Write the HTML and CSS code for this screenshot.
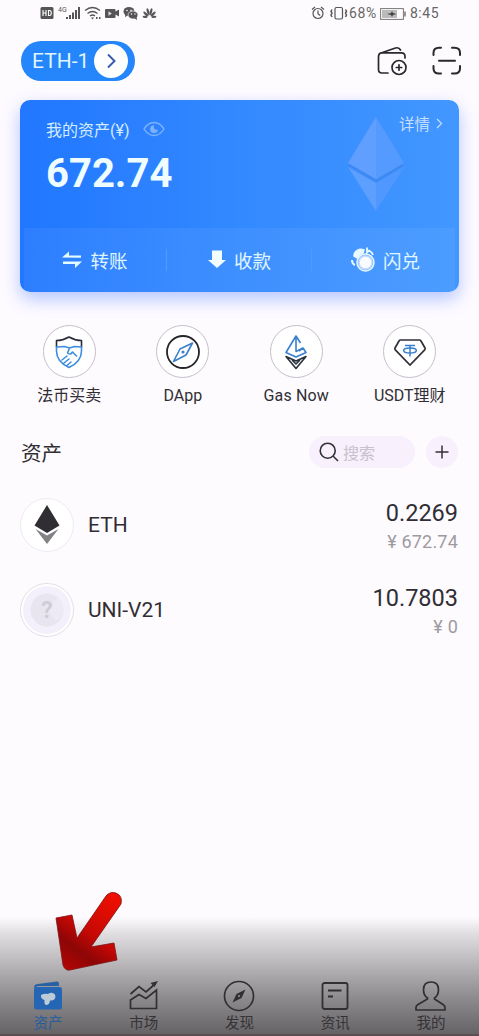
FILE: index.html
```html
<!DOCTYPE html>
<html lang="zh-CN">
<head>
<meta charset="utf-8">
<meta name="viewport" content="width=device-width, initial-scale=1">
<title>资产</title>
<link rel="stylesheet" href="styles.css">
</head>
<body>
<div class="app">
  <header class="status">
    <svg class="status-left" width="118" height="16" viewBox="0 0 118 16" fill="#555">
      <rect x="0.500" y="1" width="13" height="12" rx="1.500"/>
      <path d="M3 4v6M6 4v6M3 7h3M8.500 4.500v5h1q1.800 0 1.800-2.500t-1.800-2.500z" fill="none" stroke="#fff" stroke-width="1.100"/>
      <text x="18" y="6" class="net">4G</text>
      <path d="M26 11h2v2h-2zM29 9h2v4h-2zM32 6.500h2V13h-2zM35 4h2v9h-2zM38 1h2v12h-2z"/>
      <g fill="none" stroke="#555" stroke-width="1.300"><path d="M45 4.500q7.500-6 15 0M47.500 7.500q5-4 10 0M50 10q2.500-2 5 0"/></g>
      <path d="M51 11.500h3l-1.500 2zM56 11h1.500v2H56zM59 11h1.500v2H59z"/>
      <path d="M66 3h8.500q1 0 1 1v1.500L79 3.500v7l-3.500-2V11q0 1-1 1H66q-1 0-1-1V4q0-1 1-1z"/>
      <path d="M68.500 5.300v4.400l3.300-2.200z" fill="#ddd"/>
      <ellipse cx="89" cy="5.500" rx="5.500" ry="4.500"/><path d="M85.500 8l-.5 3 3-1.500z"/>
      <ellipse cx="93" cy="9" rx="5" ry="4" stroke="#fefbff" stroke-width=".7"/><path d="M94 12l3 2-.3-3z"/>
      <g fill="#fefbff"><circle cx="87" cy="4.500" r=".8"/><circle cx="91" cy="4.300" r=".8"/><circle cx="91.500" cy="8" r=".7"/><circle cx="95" cy="8" r=".7"/></g>
      <g transform="translate(109.500 11.500)"><ellipse cy="-6" rx="1.200" ry="3.600" transform="rotate(-14)"/><ellipse cy="-6" rx="1.200" ry="3.600" transform="rotate(14)"/><ellipse cy="-5" rx="1.200" ry="3.300" transform="rotate(-46)"/><ellipse cy="-5" rx="1.200" ry="3.300" transform="rotate(46)"/><ellipse cy="-4.500" rx="1.100" ry="2.500" transform="rotate(-82)"/><ellipse cy="-4.500" rx="1.100" ry="2.500" transform="rotate(82)"/></g>
    </svg>
    <div class="status-right">
      <svg width="38" height="16" viewBox="0 0 38 16" fill="none" stroke="#555" stroke-width="1.200">
        <circle cx="7" cy="7.500" r="5"/><path d="M7 4.500v3.300l2.200 1.700M1 3.500L4 1M13 3.500L10 1"/>
        <rect x="24" y="1.500" width="7.500" height="11.500" rx="1.500"/><path d="M21 3.500l-1 2 1 1.500-1 2 1 2M34.500 3.500l1 2-1 1.500 1 2-1 2" stroke-width="1.500"/>
      </svg>
      <span class="battery-text">68%</span>
      <svg class="battery" width="27" height="12" viewBox="0 0 27 12">
        <rect x=".6" y=".6" width="22.800" height="10.800" fill="#fefbff" stroke="#777"/><path d="M2 2h15v8H2z" fill="#bbb"/><path d="M25 3.500v5" stroke="#777" stroke-width="1.500"/><path d="M7 6l4-1 1-2 1 2 3.500 1-3.500 1-1 2-1-2z" fill="#444"/>
      </svg>
      <span class="time">8:45</span>
    </div>
  </header>

  <div class="topbar">
    <div class="wallet-pill"><span>ETH-1</span>
      <svg width="34" height="34" viewBox="0 0 34 34"><circle cx="17" cy="17" r="17" fill="#fff"/><path d="M14 10.500l6.500 6.500-6.500 6.500" fill="none" stroke="#3c5bb0" stroke-width="2"/></svg>
    </div>
    <div class="tools">
      <svg width="32" height="32" viewBox="0 0 32 32" fill="none" stroke="#29282c" stroke-width="1.700" stroke-linecap="round" stroke-linejoin="round">
        <path d="M12 28H6Q2.500 28 2.500 24.500V12Q2.500 7.800 6 7.800H25.500Q29 7.800 29 11.500V13M3.500 8.500L19.500 3Q23 2 24.500 5"/><circle cx="23" cy="22.500" r="7"/><path d="M20.300 22.500h5.400M23 19.800v5.400"/>
      </svg>
      <svg width="30" height="30" viewBox="0 0 30 30" fill="none" stroke="#29282c" stroke-width="2" stroke-linecap="round">
        <path d="M1.500 9V7Q1.500 1.800 7 1.800H9M20 1.800h2.500Q28 1.800 28 7v2M28 20v2.500q0 5-5.500 5H20M9 27.500H7q-5.500 0-5.500-5V20M7 14.800h16"/>
      </svg>
    </div>
  </div>

  <section class="card">
    <div class="card-main">
      <div class="balance">
        <div class="balance-label"><span>我的资产(¥)</span>
          <svg width="22" height="16" viewBox="0 0 22 16" fill="none" stroke="#7eb2ff" stroke-width="1.400"><path d="M1 8Q5 1.500 11 1.500T21 8Q17 14.500 11 14.500T1 8z"/><path d="M11 4.200a3.900 3.900 0 1 0 3.900 4.300Q10 9.500 11 4.200z" fill="#7eb2ff" stroke="none"/></svg>
        </div>
        <div class="amount">672.74</div>
      </div>
      <svg class="eth-mark" width="56" height="94" viewBox="0 0 56 94">
        <path d="M28 0L0 46l28 16z" fill="#609fff"/><path d="M28 0l28 46-28 16z" fill="#559bff"/><path d="M0 50l28 16v28z" fill="#5c9fff"/><path d="M56 50L28 66v28z" fill="#5098ff"/><path d="M1 48l27 16 27-16" fill="none" stroke="#4187ee" stroke-width="2"/>
      </svg>
      <div class="detail"><span>详情</span><svg width="7" height="11" viewBox="0 0 7 11"><path d="M1 1l4.500 4.500L1 10" fill="none" stroke="#c6deff" stroke-width="1.200"/></svg></div>
    </div>
    <div class="card-actions">
      <div class="action first"><svg width="20" height="18" viewBox="0 0 20 18" fill="#e5fcff"><path d="M0 6.500L7 .5v4h12v2.300zM20 10.500l-7 6.500v-4H1v-2.500z"/></svg><span>转账</span></div>
      <div class="action second"><svg width="18" height="19" viewBox="0 0 18 19" fill="#f2fdff"><path d="M4 .5h10v9.500h4l-9 8-9-8h4z"/></svg><span>收款</span></div>
      <div class="action third"><svg width="27" height="28" viewBox="0 0 27 28" fill="none" stroke="#e6faff" stroke-width="1.500"><path d="M4 10a7 6.500 0 0 1 10-6l-1 3q-4 1-6 5z" fill="#e6faff"/><path d="M17 1.500v5l2-2q3 1.500 4 4.500" stroke-width="1.800"/><path d="M2 14q0 4 3 5" stroke-width="2"/><circle cx="15.500" cy="16.500" r="8.500" fill="#77adff"/><circle cx="15.500" cy="16.500" r="6.500" fill="#f8fcff" stroke="#c5dcff"/></svg><span>闪兑</span></div>
    </div>
  </section>

  <section class="shortcuts">
    <div class="shortcut"><div class="ring"><svg width="30" height="34" viewBox="0 0 30 34" fill="none" stroke-width="1.600" stroke-linejoin="round" stroke-linecap="round"><path d="M2.500 12V5.500Q9 5.500 15 2q6 3.500 12.500 3.500V12" stroke="#292d3a"/><path d="M2.500 12v4c0 8 6 13.500 12.500 16.500C21.500 29.500 27.500 24 27.500 16v-4l-7-.5-5 1.500-5-1.500-8 .5M15.500 13l-2 5q3 2.500 5-1l4 4M8 25l5-4M10 28l5-4M13 30.500l4-3.500" stroke="#3d8de0"/></svg></div><span>法币买卖</span></div>
    <div class="shortcut"><div class="ring"><svg width="36" height="36" viewBox="0 0 36 36" fill="none"><circle cx="18" cy="18" r="16" stroke="#26252a" stroke-width="1.800"/><path d="M27.500 9L21 21 8.500 27.500 15 15z" stroke="#397fcd" stroke-width="1.600" stroke-linejoin="round"/><circle cx="18" cy="18" r="1.600" fill="#397fcd"/></svg></div><span>DApp</span></div>
    <div class="shortcut"><div class="ring"><svg width="26" height="36" viewBox="0 0 26 36" fill="none" stroke-width="1.600" stroke-linejoin="round"><path d="M17.500 9L13 2 3 18.500l10 4.500 10-4.500L20 14l-7 3.500V2M20 14l-4 3" stroke="#397fcd"/><path d="M3 22.500l10 12 10-12-10 4.500zM9 26l4 4 4-4" stroke="#29303b"/></svg></div><span class="gas">Gas Now</span></div>
    <div class="shortcut"><div class="ring"><svg width="34" height="32" viewBox="0 0 34 32" fill="none"><path d="M7.500 4h19q1 0 1.500 1l4 7q.5 1-.3 1.800L17 29 2.300 13.800Q1.500 13 2 12l4-7q.5-1 1.500-1z" stroke="#303039" stroke-width="1.700"/><g stroke="#397fcd" stroke-width="1.500"><path d="M12 9.500h10M17 9.500V20.500"/><ellipse cx="17" cy="14.500" rx="6.300" ry="2.500"/></g></svg></div><span>USDT理财</span></div>
  </section>

  <section class="assets">
    <div class="assets-head"><h2>资产</h2>
      <div class="search"><svg width="20" height="20" viewBox="0 0 20 20" fill="none" stroke="#343239" stroke-width="1.600"><circle cx="8.700" cy="8.700" r="7.500"/><path d="M14 14l5 5"/></svg><span>搜索</span></div>
      <div class="add"><svg width="14" height="14" viewBox="0 0 14 14"><path d="M7 .5v13M.5 7h13" stroke="#343239" stroke-width="1.500"/></svg></div>
    </div>
    <div class="asset"><svg class="coin" width="54" height="54" viewBox="0 0 54 54"><circle cx="27" cy="27" r="26.500" fill="#fff" stroke="#eeeaf1"/><path d="M27 7l12.500 20.500L27 35 14.500 27.500z" fill="#302e32"/><path d="M15.500 31L27 37.500 38.500 31 27 46z" fill="#858286"/></svg><span class="name">ETH</span><div class="value"><span class="qty">0.2269</span><span class="fiat">¥ 672.74</span></div></div>
    <div class="asset"><svg class="coin" width="54" height="54" viewBox="0 0 54 54"><circle cx="27" cy="27" r="26.500" fill="#fff" stroke="#e4dde6"/><circle cx="27" cy="27" r="24" fill="#f4f0fb"/><circle cx="27" cy="27" r="16.500" fill="#e8e5f0"/><path d="M27 27l11-13q4 5 6 12-2 8-8 12z" fill="#eeeaf5"/><text x="27" y="35" text-anchor="middle" class="unknown">?</text></svg><span class="name">UNI-V21</span><div class="value"><span class="qty">10.7803</span><span class="fiat">¥ 0</span></div></div>
  </section>

  <nav class="nav">
    <div class="tab active"><svg width="32" height="32" viewBox="0 0 32 32"><path d="M2 8Q2 4 6 4L25 1.500q2 0 2 2V6H6z" fill="#2862a5"/><rect x="2" y="7" width="28" height="22.500" rx="2.500" fill="#2566b4"/><path d="M9 15q4-2 7-1 4-2.500 7 .5 1.500 5-3 6h-2q-.500 4.500-4 4.500-2-.5-1.500-5-4-1-3.500-5z" fill="#bccbd7"/></svg><span>资产</span></div>
    <div class="tab"><svg width="32" height="32" viewBox="0 0 32 32" fill="none" stroke="#302f32" stroke-width="1.700"><path d="M2.500 14l8.500-7.500 7 5.500L27 4M2.500 28.500V20L11 14.500l7 4L28.500 10v18.500z"/><path d="M30 1l-7.500 2 4 4z" fill="#302f32" stroke="none"/></svg><span>市场</span></div>
    <div class="tab"><svg width="32" height="32" viewBox="0 0 32 32"><circle cx="16" cy="16" r="14.500" fill="none" stroke="#302f32" stroke-width="1.700"/><path d="M22.500 9.500L18.500 18 9.500 22.500 13.500 14z" fill="#302f32"/><circle cx="16" cy="16" r="1" fill="#999"/></svg><span>发现</span></div>
    <div class="tab"><svg width="32" height="32" viewBox="0 0 32 32" fill="none" stroke="#302f32" stroke-width="1.800"><rect x="3.500" y="3" width="25" height="26" rx="2"/><path d="M9 10.500h13.500M9 16.500h5"/></svg><span>资讯</span></div>
    <div class="tab"><svg width="32" height="32" viewBox="0 0 32 32" fill="none" stroke="#302f32" stroke-width="1.700" stroke-linejoin="round"><path d="M16 2q-7.500 0-7.500 7.500 0 6 4 8.500v1L3 24.500q-2 1-2 3v2.500h29v-2.500q0-2-2-3L19.500 19v-1q4-2.500 4-8.500Q23.500 2 16 2z"/></svg><span>我的</span></div>
  </nav>
  <svg class="pointer" width="70" height="84" viewBox="0 0 70 84">
    <defs><linearGradient id="red" x1=".8" y1="0" x2=".2" y2="1"><stop stop-color="#ed1000"/><stop offset=".5" stop-color="#c70805"/><stop offset=".75" stop-color="#8d0606"/><stop offset="1" stop-color="#b00505"/></linearGradient></defs>
    <path d="M52 5Q56 0 62 2q7 3 5 11L37 56l23-4 3 17L16 79q-5 1-7-5L2 27l16-3 5 23z" fill="url(#red)" stroke="#7e1211" stroke-width=".8"/>
  </svg>
</div>
</body>
</html>
```
FILE: styles.css
```css
* { box-sizing: border-box; }
body {
  margin: 0;
  background: #fefbff;
  color: #302e33;
  font-family: Roboto, "Noto Sans CJK SC", sans-serif;
}
svg { display: block; flex: none; }
.app {
  position: relative;
  display: flex;
  flex-direction: column;
  width: 479px;
  height: 1036px;
  overflow: hidden;
}
.status {
  display: flex;
  justify-content: space-between;
  height: 40px;
  padding: 6px 40px 0;
}
.net { font-size: 7px; }
.status-right {
  display: flex;
  align-items: center;
  height: 15px;
  color: #666;
  font-size: 14px;
  line-height: 15px;
}
.battery-text { letter-spacing: .7px; }
.battery { margin: 0 3px 0 3px; }
.time { letter-spacing: .5px; }
.topbar {
  display: flex;
  justify-content: space-between;
  align-items: flex-start;
  height: 60px;
  padding: 1px 17px 0 21px;
}
.wallet-pill {
  display: flex;
  align-items: center;
  justify-content: space-between;
  width: 114px;
  height: 40px;
  padding: 0 7px 0 11px;
  border-radius: 20px;
  background: #2585fa;
  color: #dff5ff;
  font-size: 21px;
}
.tools { display: flex; align-items: center; gap: 24px; padding-top: 4px; }
.card {
  display: flex;
  flex-direction: column;
  flex: none;
  width: 439px;
  height: 192px;
  margin-left: 20px;
  border-radius: 10px;
  background: linear-gradient(90deg, #2177ff, #3389ff 50%, #4297ff);
  box-shadow: 0 7px 18px rgba(65, 115, 255, .4);
}
.card-main { display: flex; height: 128px; padding: 16px 16px 0 26px; }
.balance { flex: 1; }
.balance-label {
  display: flex;
  align-items: center;
  gap: 14px;
  height: 25px;
  color: #d4ecff;
  font-size: 16px;
}
.amount { color: #f0fdff; font-size: 40px; font-weight: 700; line-height: 48px; margin-top: 9px; }
.eth-mark { margin: 1px -5px 0 0; }
.detail {
  display: flex;
  align-items: center;
  gap: 6px;
  height: 14px;
  color: #c6deff;
  font-size: 15.500px;
}
.card-actions {
  display: grid;
  grid-template-columns: 147px 145px 147px;
  height: 64px;
  background: linear-gradient(90deg, transparent 4px, rgba(255,255,255,.055) 4px, rgba(255,255,255,.055) 435px, transparent 435px);
}
.action {
  display: flex;
  align-items: center;
  justify-content: center;
  gap: 8px;
  padding-bottom: 1px;
  color: #e0f7ff;
  font-size: 18.500px;
}
.first { padding-left: 3px; }
.third { gap: 6px; padding-right: 1px; }
.first, .second {
  background: linear-gradient(#519aff, #519aff) right 21px / 1px 22px no-repeat;
}
.shortcuts {
  display: grid;
  grid-template-columns: repeat(4, 113.500px);
  height: 134px;
  padding: 33px 0 0 12.500px;
}
.shortcut {
  display: flex;
  flex-direction: column;
  align-items: center;
  font-size: 16px;
  line-height: 20px;
  white-space: nowrap;
}
.gas { letter-spacing: .15px; }
.ring {
  display: grid;
  place-items: center;
  width: 53px;
  height: 53px;
  margin-bottom: 8px;
  border: 1.500px solid #c7becb;
  border-radius: 50%;
  background: #fff;
}
.assets { padding: 0 21px; }
.assets-head { display: flex; align-items: center; height: 52px; }
h2 { flex: 1; margin: 0; font-size: 20.500px; font-weight: 400; }
.search {
  display: flex;
  align-items: center;
  gap: 4px;
  width: 106px;
  height: 32px;
  margin-right: 11px;
  padding-left: 10px;
  border-radius: 16px;
  background: #f8f0fc;
  color: #c7c1ce;
  font-size: 16px;
}
.add {
  display: grid;
  place-items: center;
  width: 32px;
  height: 32px;
  border-radius: 50%;
  background: #f8f0fc;
}
.asset { display: flex; align-items: center; height: 85.500px; padding-top: 8px; }
.coin { margin-left: -1px; }
.name { flex: 1; padding-left: 14px; font-size: 21px; }
.value { display: flex; flex-direction: column; align-items: flex-end; padding-top: 3px; }
.qty { font-size: 23.500px; line-height: 30px; }
.fiat { color: #9d9a9f; font-size: 18px; letter-spacing: .2px; line-height: 27px; }
.unknown { fill: #d0ccd7; font-size: 23px; font-weight: 700; }
.nav {
  display: grid;
  grid-template-columns: repeat(5, 1fr);
  height: 119px;
  margin-top: auto;
  padding-top: 63px;
  border-bottom: 2px solid #5c4e52;
  background: linear-gradient(#fefbff, #e0dee0 14%, #c8c6c9 30%, #a9a7aa 50%, #89878a 72%, #656366);
}
.tab {
  display: flex;
  flex-direction: column;
  align-items: center;
  color: #343336;
  font-size: 14.500px;
  line-height: 20px;
}
.tab svg { margin-bottom: 2px; }
.active { color: #275d9d; }
.pointer { position: absolute; left: 54px; top: 891px; }
```
